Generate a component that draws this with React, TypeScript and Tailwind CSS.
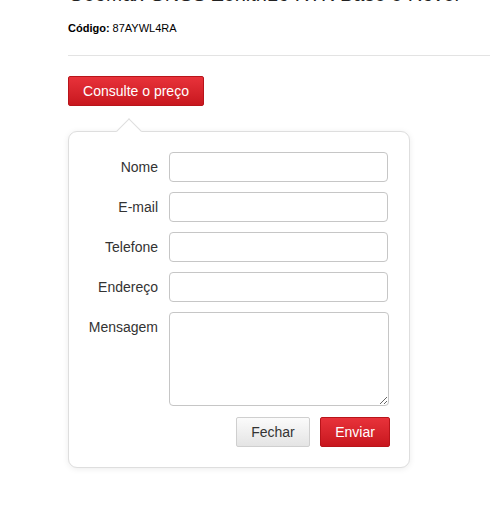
import React from "react";

function Row({ label, children, top }: { label: string; children: React.ReactNode; top?: boolean }) {
  return (
    <div className={`flex ${top ? "items-start" : "items-center"} gap-[11px]`}>
      <label className="w-[89px] shrink-0 text-right text-[14px] leading-[30px] text-[#333]">{label}</label>
      {children}
    </div>
  );
}

export default function App() {
  const inputCls =
    "h-[30px] w-[219px] rounded-[4px] border border-[#c6c6c6] bg-white px-2 text-[14px] outline-none";
  return (
    <div className="min-h-[519px] w-[490px] overflow-hidden bg-white pl-[68px] text-black" style={{ fontFamily: '"Liberation Sans", Arial, sans-serif' }}>
      <h1 className="mt-[-17px] whitespace-nowrap text-[20px] leading-[22px] font-normal text-[#222]">
        GeoMax GNSS Zenith16 RTK Base e Rover
      </h1>
      <div className="mt-[17px] text-[11px] leading-[13px] text-black">
        <span className="font-bold">Código:</span> 87AYWL4RA
      </div>
      <div className="mt-[20px] h-px bg-[#e3e3e3]" />
      <button className="mt-[20px] flex h-[30px] w-[136px] items-center justify-center rounded-[2px] border border-[#b8141a] bg-gradient-to-b from-[#e8323a] to-[#c8161e] text-[14px] text-white">
        Consulte o preço
      </button>
      <div className="relative mt-[25px] w-[342px] rounded-[9px] border border-[#dedede] bg-white pb-[20px] pr-[21px] pt-[20px] shadow-[0_1px_6px_rgba(0,0,0,0.08)]">
        <div className="absolute left-[51px] top-[-10px] h-[18px] w-[18px] rotate-45 border-l border-t border-[#dedede] bg-white" />
        <div className="flex flex-col gap-[10px]">
          <Row label="Nome"><input className={inputCls} /></Row>
          <Row label="E-mail"><input className={inputCls} /></Row>
          <Row label="Telefone"><input className={inputCls} /></Row>
          <Row label="Endereço"><input className={inputCls} /></Row>
          <Row label="Mensagem" top>
            <textarea className="h-[94px] w-[220px] shrink-0 rounded-[4px] border border-[#c6c6c6] bg-white px-2 text-[14px] outline-none" />
          </Row>
          <div className="mr-[-2px] mt-px flex justify-end gap-[10px]">
            <button className="flex h-[30px] w-[74px] items-center justify-center rounded-[2px] border border-[#cfcfcf] bg-gradient-to-b from-[#fbfbfb] to-[#e4e4e4] text-[14px] text-[#333]">
              Fechar
            </button>
            <button className="flex h-[30px] w-[70px] items-center justify-center rounded-[2px] border border-[#b8141a] bg-gradient-to-b from-[#e8323a] to-[#c8161e] text-[14px] text-white">
              Enviar
            </button>
          </div>
        </div>
      </div>
    </div>
  );
}
